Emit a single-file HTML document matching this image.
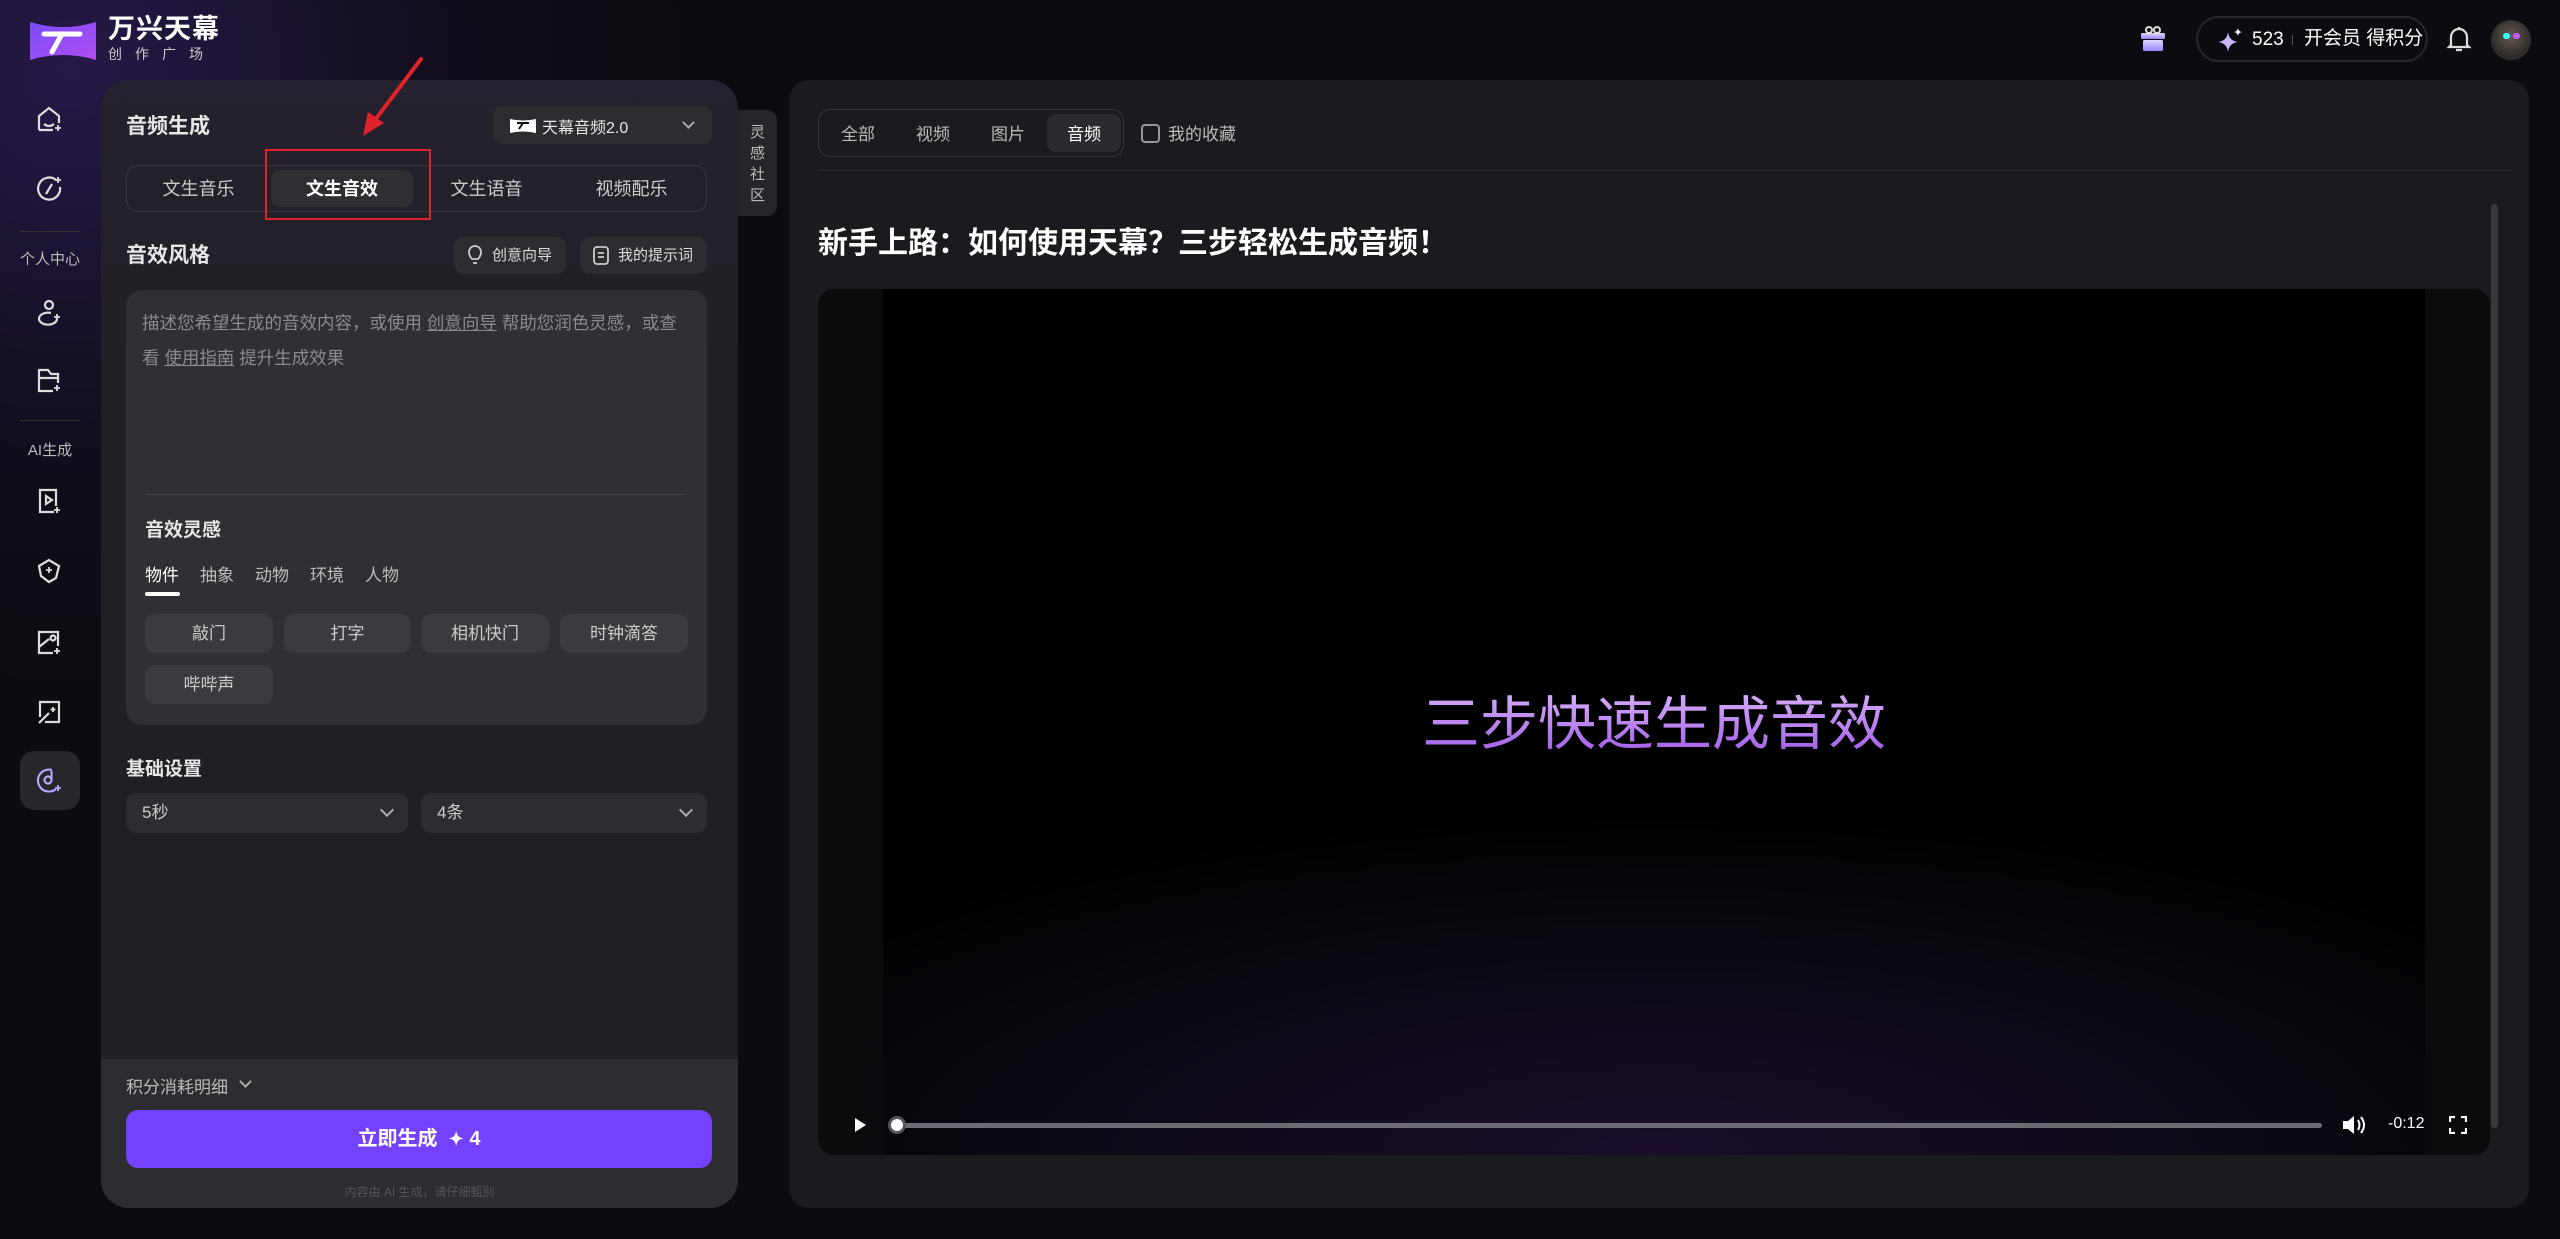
<!DOCTYPE html>
<html><head><meta charset="utf-8"><style>
*{box-sizing:border-box;margin:0;padding:0}
body{width:2560px;height:1239px;overflow:hidden;background:#0c0c10;font-family:"Liberation Sans","Noto Sans CJK SC",sans-serif;color:#ddd;position:relative}
.a{position:absolute}
.glow{left:-200px;top:-200px;width:900px;height:900px;background:radial-gradient(circle at 30% 30%,rgba(70,40,140,.45),rgba(40,20,80,.15) 45%,transparent 70%)}
.ico{width:30px;height:30px;left:34px}
.lbl{font-size:15px;color:#bbb;width:100px;text-align:center;left:0}
.panel{left:101px;top:80px;width:637px;height:1128px;border-radius:28px;background:linear-gradient(180deg,#25212e 0%,#202024 25%,#202024 100%);overflow:hidden}
.foot{left:0;top:979px;width:637px;height:149px;background:#2c2c31}
.b{font-weight:bold;color:#e6e6e6}
.chip{height:39px;border-radius:10px;background:#3a3a3f;color:#ccc;font-size:17px;text-align:center;line-height:39px}
.sel{height:40px;border-radius:10px;background:#2c2c31;font-size:17px;color:#ccc;line-height:40px;padding-left:16px}
.chev{position:absolute;right:16px;top:12px;width:10px;height:10px;border-right:2px solid #aaa;border-bottom:2px solid #aaa;transform:rotate(45deg)}
</style></head><body>
<div class="a glow"></div>
<svg class="a" style="left:30px;top:20px" width="66" height="42" viewBox="0 0 66 42"><defs><linearGradient id="lg" x1="0" x2="1" y1="0" y2="1"><stop offset="0" stop-color="#7b4dff"/><stop offset="1" stop-color="#b04df0"/></linearGradient></defs><path d="M0 2 Q33 12 66 2 V40 Q33 30 0 40Z" fill="url(#lg)"/><path d="M14 14 H50 M32 14 L22 32" stroke="#fff" stroke-width="5" fill="none" stroke-linecap="round"/></svg>
<div class="a" style="left:108px;top:14px;font-size:27px;line-height:30px;font-weight:bold;color:#fff;letter-spacing:1px">万兴天幕</div>
<div class="a" style="left:108px;top:46px;font-size:14px;line-height:16px;color:#ccc;letter-spacing:13px">创作广场</div>
<svg class="a ico" style="top:104px" viewBox="0 0 30 30" fill="none" stroke="#ddd" stroke-width="2.2"><path d="M5 26V12L15 4 25 12v7M5 26h14M10 20q5 4 10 0"/><path d="M24 21v6M21 24h6" stroke-width="1.8"/></svg>
<svg class="a ico" style="top:174px" viewBox="0 0 30 30" fill="none" stroke="#ddd" stroke-width="2.2"><path d="M22 6A11 11 0 1 0 26 13"/><path d="M18 10 12 20"/><path d="M24 3v6M21 6h6" stroke-width="1.8"/></svg>
<div class="a" style="left:20px;top:231px;width:60px;height:1px;background:#333"></div>
<div class="a lbl" style="top:248px">个人中心</div>
<svg class="a ico" style="top:297px" viewBox="0 0 30 30" fill="none" stroke="#ddd" stroke-width="2.2"><circle cx="15" cy="8" r="4"/><path d="M23 22A9 6 0 1 1 17 16"/><path d="M23 17v6M20 20h6" stroke-width="1.8"/></svg>
<svg class="a ico" style="top:365px" viewBox="0 0 30 30" fill="none" stroke="#ddd" stroke-width="2.2"><path d="M19 26H5V5h9l3 4h7v9M5 13h19"/><path d="M23 20v6M20 23h6" stroke-width="1.8"/></svg>
<div class="a" style="left:20px;top:420px;width:60px;height:1px;background:#333"></div>
<div class="a lbl" style="top:439px">AI生成</div>
<svg class="a ico" style="top:486px" viewBox="0 0 30 30" fill="none" stroke="#ddd" stroke-width="2.2"><path d="M20 26H6V4h16v16"/><path d="M12 10l6 4-6 4z"/><path d="M23 21v6M20 24h6" stroke-width="1.8"/></svg>
<svg class="a ico" style="top:556px" viewBox="0 0 30 30" fill="none" stroke="#ddd" stroke-width="2.2"><path d="M5 10L15 4l10 6-3 12-7 4-8-6z"/><path d="M15 11v6M12 14h6" stroke-width="1.8"/></svg>
<svg class="a ico" style="top:627px" viewBox="0 0 30 30" fill="none" stroke="#ddd" stroke-width="2.2"><path d="M19 26H5V5h19v14M5 20L15 12"/><circle cx="19" cy="11" r="2.5"/><path d="M23 21v6M20 24h6" stroke-width="1.8"/></svg>
<svg class="a ico" style="top:697px" viewBox="0 0 30 30" fill="none" stroke="#ddd" stroke-width="2.2"><path d="M6 20V5h19v20H11M5 26L15 16"/><path d="M19 10v5M16.5 12.5h5" stroke-width="1.8"/></svg>
<div class="a" style="left:20px;top:751px;width:60px;height:59px;border-radius:14px;background:#26262b"></div>
<svg class="a ico" style="top:765px" viewBox="0 0 30 30" fill="none" stroke="#b9a6ff" stroke-width="2.2"><path d="M22 24A11 11 0 1 1 18 5"/><circle cx="14" cy="15" r="3.5"/><path d="M17.5 15V6"/><path d="M24 20v6M21 23h6" stroke-width="1.8"/></svg>
<svg class="a" style="left:2139px;top:24px" width="28" height="28" viewBox="0 0 28 28"><defs><linearGradient id="gg" x1="0" y1="0" x2="0" y2="1"><stop offset="0" stop-color="#e0d6ff"/><stop offset="1" stop-color="#9b85ff"/></linearGradient></defs><rect x="2" y="9" width="24" height="6" rx="1.5" fill="url(#gg)"/><rect x="4" y="16" width="20" height="11" rx="1.5" fill="url(#gg)"/><circle cx="10" cy="6" r="3" fill="none" stroke="#ddd" stroke-width="2"/><circle cx="18" cy="6" r="3" fill="none" stroke="#ddd" stroke-width="2"/></svg>
<div class="a" style="left:2196px;top:16px;width:232px;height:46px;border-radius:23px;border:2px solid #26262b;background:#0c0c10"></div>
<svg class="a" style="left:2218px;top:28px" width="24" height="24" viewBox="0 0 24 24"><path d="M10 4Q11 13 20 14Q11 15 10 24Q9 15 0 14Q9 13 10 4Z" fill="#c9b8ff"/><path d="M20 0Q20.5 3.5 24 4Q20.5 4.5 20 8Q19.5 4.5 16 4Q19.5 3.5 20 0Z" fill="#fff"/></svg>
<div class="a" style="left:2252px;top:29px;font-size:19px;line-height:22px;color:#fff">523</div>
<div class="a" style="left:2292px;top:35px;width:1px;height:10px;background:#555"></div>
<div class="a" style="left:2304px;top:28px;font-size:19px;line-height:22px;color:#fff">开会员 得积分</div>
<svg class="a" style="left:2446px;top:25px" width="26" height="28" viewBox="0 0 26 28" fill="none" stroke="#ddd" stroke-width="2.2"><path d="M5 20V12a8 8 0 0 1 16 0v8l2 2H3z"/><path d="M10 25h6M13 2v2"/></svg>
<div class="a" style="left:2491px;top:20px;width:40px;height:40px;border-radius:50%;background:radial-gradient(circle at 50% 40%,#6a5a50,#2a2a2a 70%);border:1px solid #333"></div>
<div class="a" style="left:2503px;top:33px;width:7px;height:6px;border-radius:3px;background:#3ff"></div>
<div class="a" style="left:2513px;top:33px;width:7px;height:6px;border-radius:3px;background:#c5f"></div>
<div class="a panel">
  <div class="a b" style="left:25px;top:30px;font-size:21px">音频生成</div>
  <div class="a" style="left:392px;top:26px;width:219px;height:38px;border-radius:10px;background:#2c2c31"></div>
  <svg class="a" style="left:409px;top:38px" width="26" height="16" viewBox="0 0 26 16"><path d="M0 1Q13 4 26 1V15Q13 12 0 15Z" fill="#fff"/><path d="M7 5H19M13 5 9 11" stroke="#111" stroke-width="2"/></svg>
  <div class="a" style="left:441px;top:34px;font-size:16px;color:#e6e6e6">天幕音频2.0</div>
  <div class="a" style="left:583px;top:38px;width:9px;height:9px;border-right:2px solid #aaa;border-bottom:2px solid #aaa;transform:rotate(45deg)"></div>
  <div class="a" style="left:25px;top:85px;width:581px;height:47px;border-radius:12px;border:1px solid #36363b"></div>
  <div class="a" style="left:170px;top:90px;width:142px;height:37px;border-radius:9px;background:#2e2e33"></div>
  <div class="a" style="left:25px;top:95px;width:145px;text-align:center;font-size:18px;color:#ccc">文生音乐</div>
  <div class="a b" style="left:170px;top:95px;width:142px;text-align:center;font-size:18px;color:#fff">文生音效</div>
  <div class="a" style="left:313px;top:95px;width:145px;text-align:center;font-size:18px;color:#ccc">文生语音</div>
  <div class="a" style="left:458px;top:95px;width:145px;text-align:center;font-size:18px;color:#ccc">视频配乐</div>
  <div class="a" style="left:164px;top:69px;width:166px;height:71px;border:2px solid #e0232b"></div>
  <div class="a b" style="left:25px;top:159px;font-size:21px">音效风格</div>
  <div class="a" style="left:353px;top:157px;width:112px;height:37px;border-radius:10px;background:#2c2c31;font-size:15px;color:#ddd;line-height:37px;padding-left:38px">创意向导</div>
  <svg class="a" style="left:367px;top:165px" width="14" height="22" viewBox="0 0 14 22" fill="none" stroke="#ccc" stroke-width="1.8"><path d="M4 14Q1 11 1 7a6 6 0 0 1 12 0q0 4-3 7zM5 18h4"/></svg>
  <div class="a" style="left:479px;top:157px;width:127px;height:37px;border-radius:10px;background:#2c2c31;font-size:15px;color:#ddd;line-height:37px;padding-left:38px">我的提示词</div>
  <svg class="a" style="left:492px;top:166px" width="16" height="19" viewBox="0 0 16 19" fill="none" stroke="#ccc" stroke-width="1.8"><rect x="1" y="1" width="14" height="17" rx="3"/><path d="M5 7h6M5 11h6"/></svg>
  <div class="a" style="left:25px;top:210px;width:581px;height:435px;border-radius:16px;background:#2f2f34"></div>
  <div class="a" style="left:41px;top:226px;width:538px;font-size:17.5px;line-height:35px;color:#8a8a90">描述您希望生成的音效内容，或使用 <u>创意向导</u> 帮助您润色灵感，或查看 <u>使用指南</u> 提升生成效果</div>
  <div class="a" style="left:44px;top:414px;width:541px;height:1px;background:#45454a"></div>
  <div class="a b" style="left:44px;top:435px;font-size:19px">音效灵感</div>
  <div class="a" style="left:44px;top:481px;font-size:17px;color:#fff">物件</div>
  <div class="a" style="left:99px;top:481px;font-size:17px;color:#bbb">抽象</div>
  <div class="a" style="left:154px;top:481px;font-size:17px;color:#bbb">动物</div>
  <div class="a" style="left:209px;top:481px;font-size:17px;color:#bbb">环境</div>
  <div class="a" style="left:264px;top:481px;font-size:17px;color:#bbb">人物</div>
  <div class="a" style="left:44px;top:512px;width:35px;height:4px;border-radius:2px;background:#fff"></div>
  <div class="a chip" style="left:44px;top:534px;width:128px">敲门</div>
  <div class="a chip" style="left:183px;top:534px;width:127px">打字</div>
  <div class="a chip" style="left:320px;top:534px;width:128px">相机快门</div>
  <div class="a chip" style="left:459px;top:534px;width:128px">时钟滴答</div>
  <div class="a chip" style="left:44px;top:585px;width:128px">哔哔声</div>
  <div class="a b" style="left:25px;top:674px;font-size:19px">基础设置</div>
  <div class="a sel" style="left:25px;top:713px;width:282px">5秒<div class="chev"></div></div>
  <div class="a sel" style="left:320px;top:713px;width:286px">4条<div class="chev"></div></div>
  <div class="a foot">
    <div class="a" style="left:25px;top:14px;font-size:17px;color:#bbb">积分消耗明细</div>
    <div class="a" style="left:140px;top:18px;width:9px;height:9px;border-right:2px solid #aaa;border-bottom:2px solid #aaa;transform:rotate(45deg)"></div>
    <div class="a" style="left:25px;top:51px;width:586px;height:58px;border-radius:12px;background:#7442fe;text-align:center;line-height:58px;font-size:20px;font-weight:bold;color:#fff">立即生成 &nbsp;<span style="font-size:18px">✦</span> 4</div>
    <div class="a" style="left:0;top:124px;width:637px;text-align:center;font-size:12px;color:#55555a">内容由 AI 生成，请仔细甄别</div>
  </div>
</div>
<div class="a" style="left:738px;top:110px;width:39px;height:106px;border-radius:0 10px 10px 0;background:#26262a;color:#bbb;font-size:15px;line-height:21px;text-align:center;padding-top:12px">灵<br>感<br>社<br>区</div>
<div class="a" style="left:789px;top:80px;width:1740px;height:1128px;border-radius:20px;background:#1b1b1f"></div>
<div class="a" style="left:818px;top:109px;width:306px;height:48px;border-radius:12px;border:1px solid #36363b"></div>
<div class="a" style="left:1047px;top:114px;width:74px;height:38px;border-radius:9px;background:#2a2a2f"></div>
<div class="a" style="left:841px;top:120px;font-size:17px;color:#bbb">全部</div>
<div class="a" style="left:916px;top:120px;font-size:17px;color:#bbb">视频</div>
<div class="a" style="left:991px;top:120px;font-size:17px;color:#bbb">图片</div>
<div class="a" style="left:1067px;top:120px;font-size:17px;color:#fff">音频</div>
<div class="a" style="left:1141px;top:124px;width:19px;height:19px;border-radius:4px;border:2px solid #999"></div>
<div class="a" style="left:1168px;top:120px;font-size:17px;color:#bbb">我的收藏</div>
<div class="a" style="left:818px;top:170px;width:1694px;height:1px;background:#2d2d32"></div>
<div class="a" style="left:818px;top:218px;font-size:30px;font-weight:bold;color:#fff">新手上路：如何使用天幕？三步轻松生成音频！</div>
<div class="a" style="left:818px;top:289px;width:1672px;height:866px;border-radius:16px;background:#0b0b0d;overflow:hidden">
  <div class="a" style="left:65px;top:0;width:1542px;height:866px;background:radial-gradient(ellipse 70% 40% at 50% 100%,rgba(35,15,65,.6),rgba(15,6,30,.4) 55%,#000 100%)"></div>
  <div class="a" style="left:65px;top:388px;width:1542px;text-align:center;font-size:58px;background:linear-gradient(180deg,#e3c2ff,#9c55e6);-webkit-background-clip:text;color:transparent">三步快速生成音效</div>
  <svg class="a" style="left:35px;top:828px" width="14" height="16" viewBox="0 0 14 16"><path d="M2 1l11 7-11 7z" fill="#fff"/></svg>
  <div class="a" style="left:78px;top:834px;width:1426px;height:5px;border-radius:3px;background:#6e6b74"></div>
  <div class="a" style="left:70px;top:827px;width:18px;height:18px;border-radius:50%;background:#fff;border:3px solid #555"></div>
  <svg class="a" style="left:1524px;top:825px" width="24" height="22" viewBox="0 0 24 22"><path d="M1 7h5l6-5v18l-6-5H1z" fill="#fff"/><path d="M16 6q3 5 0 10M19 3q6 8 0 16" stroke="#fff" stroke-width="2" fill="none"/></svg>
  <div class="a" style="left:1570px;top:826px;font-size:16px;color:#fff">-0:12</div>
  <svg class="a" style="left:1631px;top:827px" width="18" height="18" viewBox="0 0 18 18" fill="none" stroke="#fff" stroke-width="2.2"><path d="M1 6V1h5M12 1h5v5M17 12v5h-5M6 17H1v-5"/></svg>
</div>
<div class="a" style="left:2491px;top:204px;width:7px;height:924px;border-radius:4px;background:#38383d"></div>
<svg class="a" style="left:350px;top:50px" width="90" height="95" viewBox="0 0 90 95"><path d="M71 9 L22 74" stroke="#e0232b" stroke-width="4" stroke-linecap="round"/><path d="M13 86 L18 62 L34 73Z" fill="#e0232b"/></svg>
</body></html>
